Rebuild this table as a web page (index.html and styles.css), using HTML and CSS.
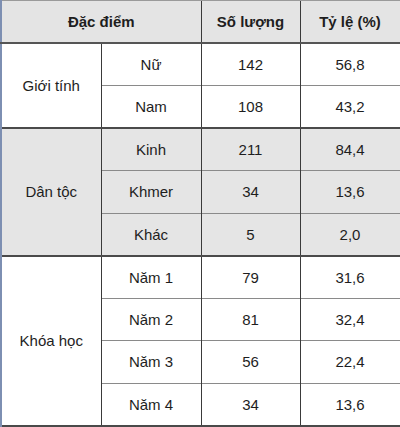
FILE: index.html
```html
<!DOCTYPE html>
<html lang="vi">
<head>
<meta charset="utf-8">
<link rel="stylesheet" href="styles.css">
</head>
<body>
<table class="tbl">
  <colgroup>
    <col class="c1"><col class="c2"><col class="c3"><col class="c4">
  </colgroup>
  <thead>
    <tr class="head">
      <th colspan="2">Đặc điểm</th>
      <th>Số lượng</th>
      <th>Tỷ lệ (%)</th>
    </tr>
  </thead>
  <tbody class="grp white">
    <tr><td rowspan="2" class="lbl">Giới tính</td><td>Nữ</td><td>142</td><td>56,8</td></tr>
    <tr class="sub"><td>Nam</td><td>108</td><td>43,2</td></tr>
  </tbody>
  <tbody class="grp gray">
    <tr><td rowspan="3" class="lbl">Dân tộc</td><td>Kinh</td><td>211</td><td>84,4</td></tr>
    <tr class="sub"><td>Khmer</td><td>34</td><td>13,6</td></tr>
    <tr class="sub"><td>Khác</td><td>5</td><td>2,0</td></tr>
  </tbody>
  <tbody class="grp white">
    <tr><td rowspan="4" class="lbl">Khóa học</td><td>Năm 1</td><td>79</td><td>31,6</td></tr>
    <tr class="sub"><td>Năm 2</td><td>81</td><td>32,4</td></tr>
    <tr class="sub"><td>Năm 3</td><td>56</td><td>22,4</td></tr>
    <tr class="sub"><td>Năm 4</td><td>34</td><td>13,6</td></tr>
  </tbody>
</table>
</body>
</html>
```
FILE: styles.css
```css
html, body {
  margin: 0;
  padding: 0;
  background: #ffffff;
}
.tbl {
  width: 400px;
  border-collapse: collapse;
  table-layout: fixed;
  font-family: "Liberation Sans", Arial, sans-serif;
  font-size: 15px;
  color: #1e1e1e;
  border-top: 1px solid #9a9a9a;
  border-left: 2px solid #7d8fb2;
  border-right: 3px solid #4f7fc4;
  border-bottom: 2px solid #4a4a4a;
}
.c1 { width: 100px; }
.c2 { width: 100px; }
.c3 { width: 99px; }
.c4 { width: 101px; }
.tbl th, .tbl td {
  text-align: center;
  vertical-align: middle;
  padding: 0;
  border-left: 1px solid #3a3a3a;
  border-top: 1px solid #3a3a3a;
}
.tbl tr { height: 42.5px; }
.head th {
  background: #e4e4e4;
  font-weight: bold;
  font-size: 15px;
  border-bottom: 2px solid #555555;
  border-top: 1px solid #9a9a9a;
}
.head th:first-child, .tbl td.lbl { border-left: 2px solid #7d8fb2; }
.gray td { background: #e5e5e5; }
.white td { background: #ffffff; }
.grp { border-top: 2px solid #4a4a4a; }
.sub td { border-top: 1px solid #8a8a8a; }
```
